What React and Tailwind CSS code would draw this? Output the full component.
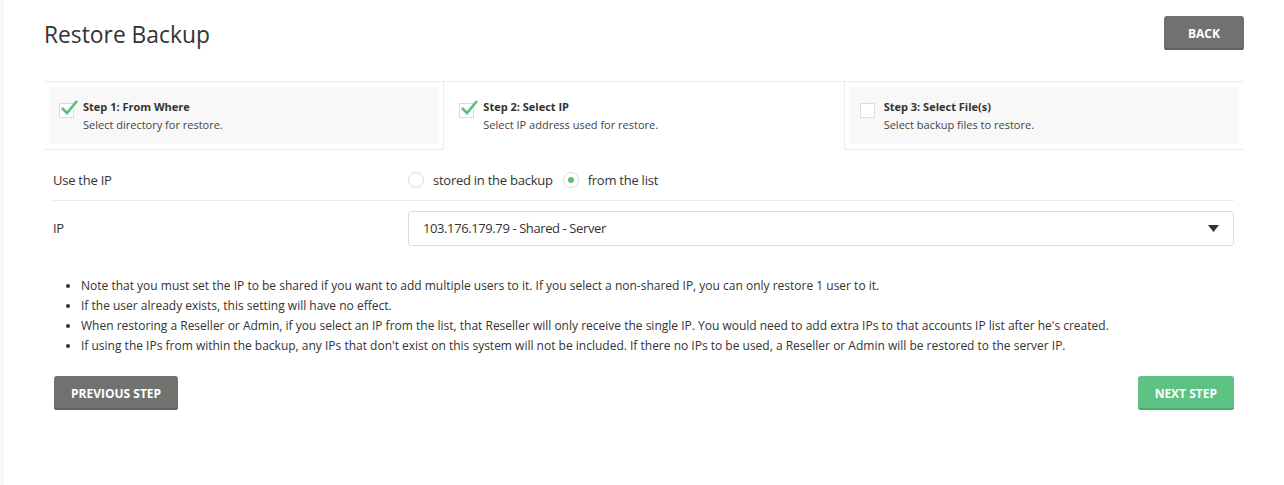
import { useState } from "react";

const steps = [
  { title: "Step 1: From Where", text: "Select directory for restore.", done: true, active: false },
  { title: "Step 2: Select IP", text: "Select IP address used for restore.", done: true, active: true },
  { title: "Step 3: Select File(s)", text: "Select backup files to restore.", done: false, active: false },
];

const notes = [
  "Note that you must set the IP to be shared if you want to add multiple users to it. If you select a non-shared IP, you can only restore 1 user to it.",
  "If the user already exists, this setting will have no effect.",
  "When restoring a Reseller or Admin, if you select an IP from the list, that Reseller will only receive the single IP. You would need to add extra IPs to that accounts IP list after he's created.",
  "If using the IPs from within the backup, any IPs that don't exist on this system will not be included. If there no IPs to be used, a Reseller or Admin will be restored to the server IP.",
];

function StepBox({ step }) {
  return (
    <div
      className={
        step.active
          ? "relative -mb-px flex-1 border-x border-[#ebebeb] bg-white px-[15px] pt-[16px] pb-[15px]"
          : "m-[5px] flex-1 bg-[#f8f8f8] px-[10px] pt-[11px] pb-[10px]"
      }
    >
      <div className="flex items-start gap-[9px]">
        <div className="relative mt-[5px] h-[15px] w-[15px] shrink-0 border border-[#dcdcdc] bg-white">
          {step.done && (
            <svg className="absolute -top-[5px] left-[0px]" width="19" height="17" viewBox="0 0 19 17">
              <path d="M2 9 L7 14 L17 2" fill="none" stroke="#5cbd7c" strokeWidth="2.6" />
            </svg>
          )}
        </div>
        <div>
          <div className="text-[11px] font-bold leading-[18px] text-[#333]">{step.title}</div>
          <div className="text-[11px] leading-[18px] text-[#444]">{step.text}</div>
        </div>
      </div>
    </div>
  );
}

function Radio({ checked, label, onSelect, className }) {
  return (
    <label className={"flex cursor-pointer items-center gap-[9px] " + className} onClick={onSelect}>
      <span className="flex h-[16px] w-[16px] items-center justify-center rounded-full border border-[#dcdcdc] bg-white">
        {checked && <span className="h-[6px] w-[6px] rounded-full bg-[#5cbd7c]" />}
      </span>
      <span>{label}</span>
    </label>
  );
}

export default function App() {
  const [source, setSource] = useState("list");

  return (
    <div className="flex min-h-[485px] bg-white font-['Open_Sans',sans-serif] text-[#333]">
      <div className="w-[4px] shrink-0 bg-[#f7f7f7]" />
      <div className="flex-1 pl-[40px] pr-[40px] pt-[16px]">
        <div className="flex items-start justify-between">
          <h1 className="pt-[4px] text-[22.8px] leading-[30px] text-[#333]">Restore Backup</h1>
          <button className="h-[34px] w-[80px] rounded-[3px] bg-[#717270] pt-[1px] text-[12px] font-bold text-white shadow-[inset_0_-2px_0_#5f605e]">
            BACK
          </button>
        </div>

        <div className="mt-[31px] flex border-y border-[#ebebeb]">
          {steps.map((s) => (
            <StepBox key={s.title} step={s} />
          ))}
        </div>

        <div className="pl-[9px] pr-[10px]">
          <div className="flex h-[51px] items-start border-b border-[#ebebeb] pt-[21px] text-[13px] leading-[18px] tracking-[-0.25px]">
            <div className="w-[355px]">Use the IP</div>
            <Radio checked={source === "backup"} label="stored in the backup" onSelect={() => setSource("backup")} />
            <Radio
              className="ml-[10px]"
              checked={source === "list"}
              label="from the list"
              onSelect={() => setSource("list")}
            />
          </div>

          <div className="flex h-[55px] items-start pt-[10px] text-[13px] tracking-[-0.4px]">
            <div className="w-[355px] pt-[8px]">IP</div>
            <div className="flex h-[35px] flex-1 items-center justify-between rounded-[3px] border border-[#dcdcdc] px-[14px]">
              <span>103.176.179.79 - Shared - Server</span>
              <svg width="11" height="7" viewBox="0 0 11 7">
                <path d="M0 0 H11 L5.5 7 Z" fill="#333" />
              </svg>
            </div>
          </div>

          <ul className="mt-[20px] list-disc pl-[28px] text-[12px] leading-[20px] text-[#333] marker:text-[#333]">
            {notes.map((n) => (
              <li key={n}>{n}</li>
            ))}
          </ul>

          <div className="mt-[20px] flex justify-between">
            <button className="ml-px h-[34px] rounded-[3px] bg-[#717270] px-[17px] pt-[1px] text-[12px] font-bold text-white shadow-[inset_0_-2px_0_#5f605e]">
              PREVIOUS STEP
            </button>
            <button className="h-[34px] rounded-[3px] bg-[#5dc283] px-[17px] pt-[1px] text-[12px] font-bold text-white shadow-[inset_0_-2px_0_#4caf6e]">
              NEXT STEP
            </button>
          </div>
        </div>
      </div>
    </div>
  );
}
